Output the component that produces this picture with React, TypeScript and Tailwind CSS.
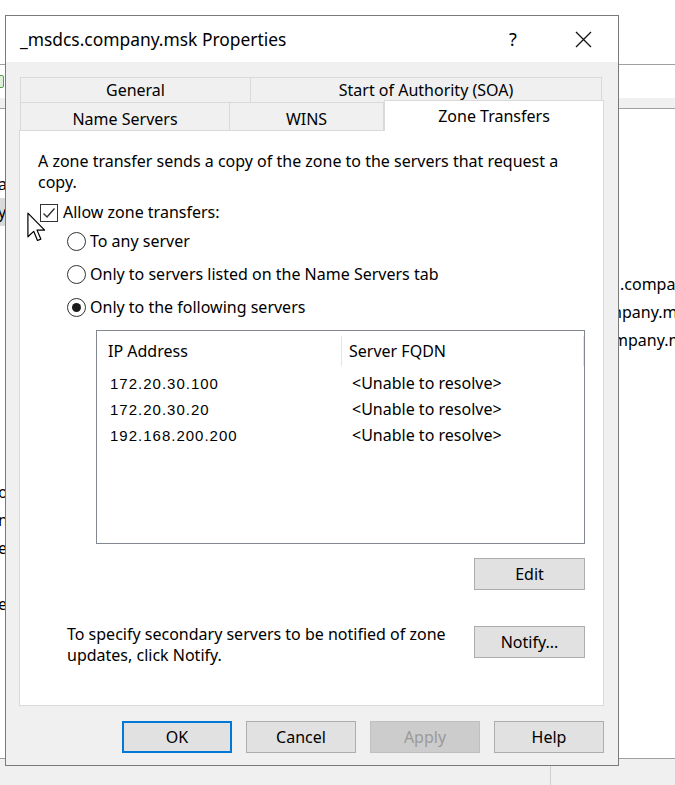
import React from 'react';
import clsx from 'clsx';

const rows = Array.from({ length: 23 }, (_, i) => i);

const WinButton: React.FC<{ label: string; primary?: boolean; disabled?: boolean; className?: string }> = ({
  label,
  primary,
  disabled,
  className,
}) => (
  <div
    className={clsx(
      'flex h-[32px] items-center justify-center text-[16px]',
      primary && 'border-2 border-[#0078d7] bg-[#e1e1e1] text-black',
      disabled && 'border border-[#bfbfbf] bg-[#cccccc] text-[#9a9a9a]',
      !primary && !disabled && 'border border-[#adadad] bg-[#e1e1e1] text-black',
      className
    )}
  >
    {label}
  </div>
);

const Radio: React.FC<{ label: string; checked?: boolean; className?: string }> = ({ label, checked, className }) => (
  <div className={clsx('ml-[29px] flex h-[21px] items-center gap-[4px]', className)}>
    <div className="flex h-[19px] w-[19px] items-center justify-center rounded-full border border-[#333333] bg-white">
      {checked && <div className="h-[9px] w-[9px] rounded-full bg-[#1a1a1a]" />}
    </div>
    <span>{label}</span>
  </div>
);

const servers = [
  { ip: '172.20.30.100', fqdn: '<Unable to resolve>' },
  { ip: '172.20.30.20', fqdn: '<Unable to resolve>' },
  { ip: '192.168.200.200', fqdn: '<Unable to resolve>' },
];

// left tree glyphs that peek out from under the dialog
const leftGlyphs: Record<number, string> = { 2: 'a', 3: 'y', 13: 'o', 14: 'n', 15: 'e', 17: 'e' };

const App: React.FC = () => {
  return (
    <div className="relative h-[785px] w-[675px] overflow-hidden bg-white font-['Noto_Sans',sans-serif] text-black">
      {/* console window behind the dialog */}
      <div className="flex h-full flex-col">
        <div className="h-[68px] border-b border-[#a0a0a0]" />
        <div className="flex h-[34px] items-center">
          <div className="-ml-[10px] h-[13px] w-[14px] rounded-[2px] border border-[#5a9e4b] bg-[#dff0d8]" />
        </div>
        <div className="h-[12px] border-b border-[#a0a0a0] bg-[#f0f0f0]" />
        <div className="flex flex-1 text-[16px]">
          <div className="flex w-[6px] flex-col pt-[5px]">
            {rows.map((r) => (
              <div
                key={r}
                className={clsx('flex h-[28px] shrink-0 items-center', r === 3 && 'bg-[#d9d9d9]')}
              >
                {leftGlyphs[r] && <span className="-ml-[2px]">{leftGlyphs[r]}</span>}
              </div>
            ))}
          </div>
          <div className="flex-1" />
          <div className="flex w-[56px] flex-col overflow-hidden pt-[161px]">
            <div className="flex h-[28px] shrink-0 items-center whitespace-nowrap">
              <span className="ml-[1px]">.company.msk</span>
            </div>
            <div className="flex h-[28px] shrink-0 items-center whitespace-nowrap">
              <span className="-ml-[12px]">mpany.msk</span>
            </div>
            <div className="flex h-[28px] shrink-0 items-center whitespace-nowrap">
              <span className="-ml-[6px]">mpany.msk</span>
            </div>
          </div>
        </div>
        <div className="flex h-[28px] border-t border-[#a0a0a0] bg-[#f0f0f0]">
          <div className="w-[551px] border-r border-[#cfcfcf]" />
        </div>
      </div>

      {/* Properties dialog */}
      <div className="absolute left-[5px] top-[15px] flex w-[614px] flex-col border border-[#7a7a7a] bg-[#f0f0f0]">
        <div className="flex h-[46px] items-center bg-white pl-[14px] pr-[12px]">
          <span className="text-[17.4px]">_msdcs.company.msk Properties</span>
          <span className="ml-auto flex w-[46px] justify-center text-[18px]">?</span>
          <span className="ml-[24px] flex w-[46px] justify-center">
            <svg width="17" height="17" viewBox="0 0 17 17" fill="none" stroke="#111" strokeWidth="1.3">
              <path d="M1 1L16 16M16 1L1 16" />
            </svg>
          </span>
        </div>

        <div className="flex flex-col pb-[12px] pl-[13px] pr-[14px] pt-[15px]">
          {/* tabs */}
          <div className="ml-[1px] flex h-[26px] text-[16px]">
            <div className="flex w-[231px] items-center justify-center border border-[#d9d9d9] bg-[#f0f0f0]">General</div>
            <div className="flex w-[351px] items-center justify-center border border-l-0 border-[#d9d9d9] bg-[#f0f0f0]">
              Start of Authority (SOA)
            </div>
          </div>
          <div className="ml-[1px] flex h-[27px] text-[16px]">
            <div className="flex w-[210px] items-center justify-center border-x border-[#d9d9d9] bg-[#f0f0f0] pt-[4px]">
              Name Servers
            </div>
            <div className="flex w-[154px] items-center justify-center border-r border-[#d9d9d9] bg-[#f0f0f0] pt-[4px]">
              WINS
            </div>
            <div className="relative z-10 -mt-[3px] flex h-[31px] w-[220px] items-center justify-center border-x border-t border-[#d9d9d9] bg-white">
              Zone Transfers
            </div>
          </div>

          {/* tab page */}
          <div className="flex h-[576px] flex-col border border-[#d9d9d9] bg-white pl-[18px] pr-[18px] pt-[20px] text-[16px] leading-[21px]">
            <p className="whitespace-nowrap">
              A zone transfer sends a copy of the zone to the servers that request a
              <br />
              copy.
            </p>

            <div className="mt-[9px] flex h-[21px] items-center">
              <div className="ml-[2px] flex h-[18px] w-[18px] items-center justify-center border border-[#333333] bg-white">
                <svg width="14" height="12" viewBox="0 0 14 12" fill="none" stroke="#333" strokeWidth="1.4">
                  <path d="M1.5 6.5L5 10L12.5 1.5" />
                </svg>
              </div>
              <span className="ml-[5px]">Allow zone transfers:</span>
            </div>

            <Radio label="To any server" className="mt-[8px]" />
            <Radio label="Only to servers listed on the Name Servers tab" className="mt-[12px]" />
            <Radio label="Only to the following servers" checked className="mt-[12px]" />

            <div className="ml-[58px] mt-[12px] flex h-[214px] flex-col border border-[#828790] bg-white">
              <div className="flex h-[39px] items-center">
                <div className="w-[245px] border-r border-[#e5e5e5] pl-[11px] leading-[30px]">IP Address</div>
                <div className="flex-1 border-r border-[#e5e5e5] pl-[7px] leading-[30px]">Server FQDN</div>
              </div>
              {servers.map((s) => (
                <div key={s.ip} className="flex h-[26px] items-center">
                  <div className="w-[246px] pl-[13px] font-['Liberation_Sans',sans-serif] text-[15px] tracking-[1px]">
                    {s.ip}
                  </div>
                  <div className="pl-[9px]">{s.fqdn}</div>
                </div>
              ))}
            </div>

            <WinButton label="Edit" className="mt-[14px] w-[111px] self-end" />

            <div className="mt-[34px] flex items-start">
              <p className="ml-[29px]">
                To specify secondary servers to be notified of zone
                <br />
                updates, click Notify.
              </p>
              <WinButton label="Notify..." className="ml-auto mt-[2px] w-[111px]" />
            </div>
          </div>

          {/* dialog buttons */}
          <div className="mt-[15px] flex justify-end gap-[14px]">
            <WinButton label="OK" primary className="w-[110px]" />
            <WinButton label="Cancel" className="w-[110px]" />
            <WinButton label="Apply" disabled className="w-[110px]" />
            <WinButton label="Help" className="w-[110px]" />
          </div>
        </div>
      </div>

      {/* mouse pointer */}
      <svg className="absolute left-[27px] top-[212px]" width="19" height="30" viewBox="0 0 12.5 19.5">
        <path
          d="M0.6 0.6L0.6 16.2L4.4 12.6L6.9 18.6L9.1 17.7L6.6 11.8L11.6 11.8Z"
          fill="#fff"
          stroke="#000"
          strokeWidth="0.8"
          strokeLinejoin="round"
        />
      </svg>
    </div>
  );
};

export default App;
